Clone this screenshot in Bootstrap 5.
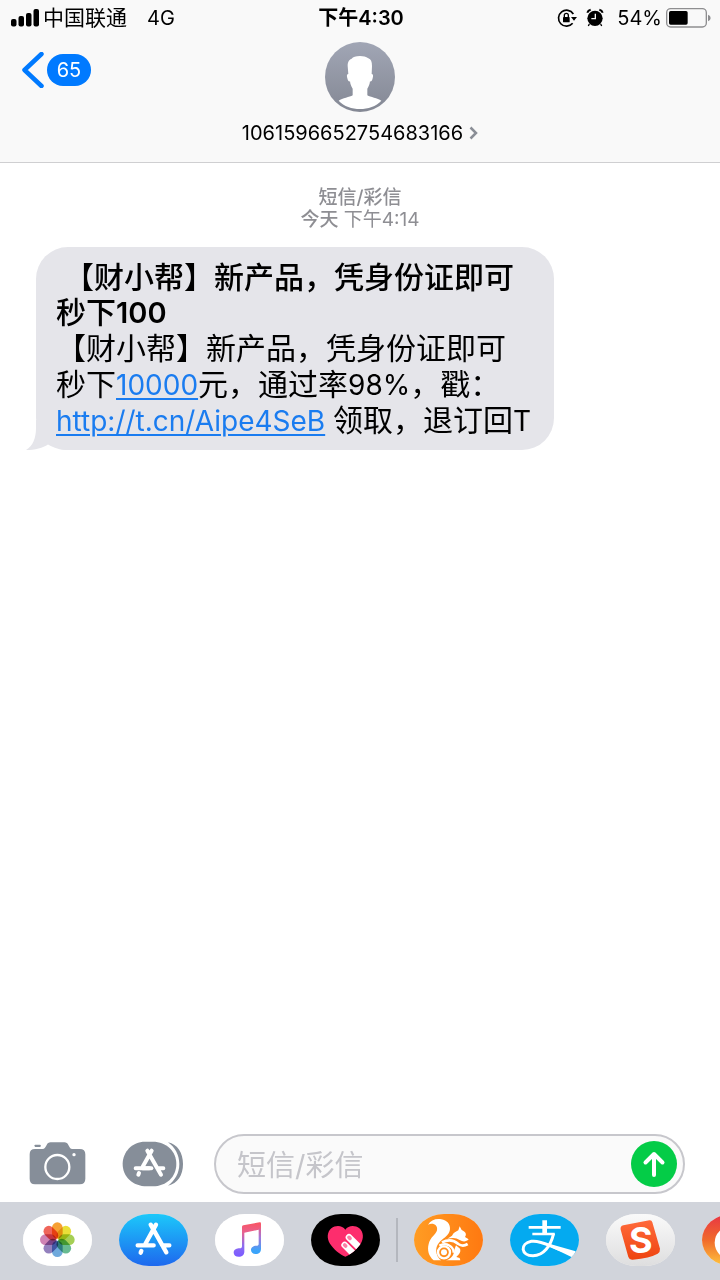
<!DOCTYPE html>
<html lang="zh-CN">
<head>
<meta charset="utf-8">
<meta name="viewport" content="width=device-width, initial-scale=1">
<title>短信/彩信</title>
<link href="https://cdn.jsdelivr.net/npm/bootstrap@5.3.0/dist/css/bootstrap.min.css" rel="stylesheet">
<style>
  body { font-family: Inter, "Noto Sans CJK SC", sans-serif; background: #fff; color: #000; }
  svg { display: block; flex-shrink: 0; }
  .top-area { background: #f9f9f9; border-bottom: 1px solid #cfcfd1; }
  .status-row { height: 36px; padding: 0 9px 0 11px; font-size: 20px; line-height: 36px; }
  .status-side { flex: 1 1 0; }
  .carrier { font-size: 21px; }
  .clock { font-size: 20px; font-weight: 600; }
  .nav-grid { display: grid; grid-template-columns: 1fr auto 1fr; padding: 6px 22px 0; height: 126px; }
  .back-btn { color: #007aff; gap: 3px; margin-top: 10px; height: 36px; }
  .unread { background: #007aff; color: #fff; border-radius: 16px; width: 44px; height: 32px; line-height: 32px; font-size: 20px; text-align: center; }
  .contact-name { font-size: 20px; line-height: 24px; gap: 6px; margin-top: 9px; color: #000; }
  .stamp { color: #8e8e93; font-size: 19px; line-height: 22px; padding-top: 24px; }
  .stamp b { font-weight: 500; }
  .bubble { background: #e5e5ea; border-radius: 32px; width: 72%; margin: 16px 0 0 36px; padding: 13px 14px 12px 20px; font-size: 30px; line-height: 36px; }
  .bubble p { position: relative; z-index: 1; }
  .bubble .title-line { font-weight: 500; line-height: 35px; }
  .bubble .lat { font-size: 28px; line-height: 28px; }
  .bubble .title-line .lat { font-weight: 600; font-size: 29px; }
  .bubble a { color: #1a7cf0; text-underline-offset: 3px; text-decoration-thickness: 2px; }
  .bubble-tail { position: absolute; left: -10px; bottom: 0; }
  .compose { padding: 0 35px 8px 29px; }
  .compose-field { border: 2px solid #c7c7cc; border-radius: 30px; background: #fafafa; height: 60px; padding: 0 6px 0 21px; margin-left: 30px; min-width: 0; }
  .compose-field input { font-size: 29px; line-height: 44px; width: 100%; min-width: 0; color: #000; }
  .compose-field input::placeholder { color: #c5c5ca; opacity: 1; }
  .gap-tools { margin-left: 36px; }
  .dock { background: #d1d4db; height: 78px; padding: 0 0 2px 23px; gap: 27px; overflow: hidden; }
  .dock button { border-radius: 30px / 26px; overflow: hidden; width: 69px; height: 52px; flex-shrink: 0; }
  .dock-rule { width: 2px; height: 44px; background: #b4b7be; margin: 0 -11px; flex-shrink: 0; }
  .petals rect { mix-blend-mode: multiply; }
</style>
</head>
<body class="d-flex flex-column min-vh-100">
<header class="top-area">
  <div class="status-row d-flex align-items-center">
    <div class="status-side d-flex align-items-center">
      <svg width="28" height="18" viewBox="0 0 56 36"><g fill="#000"><rect y="20" width="11" height="15" rx="4"/><rect x="15" y="14" width="11" height="21" rx="4"/><rect x="30" y="8" width="11" height="27" rx="4"/><rect x="45" width="11" height="35" rx="4"/></g></svg>
      <span class="carrier ms-1">中国联通</span>
      <span class="ms-3 ps-1">4G</span>
    </div>
    <div class="clock">下午4:30</div>
    <div class="status-side d-flex align-items-center justify-content-end">
      <svg width="20" height="20" viewBox="0 0 60 60"><path d="M49 18A24 24 0 1 0 47 46" fill="none" stroke="#000" stroke-width="5"/><path d="M42 27h18l-9 11z"/><rect x="18" y="27" width="20" height="16" rx="2"/><path d="M22 28v-6a6 6 0 0 1 12 0v6" fill="none" stroke="#000" stroke-width="4"/></svg>
      <svg class="mx-2" width="20" height="20" viewBox="0 0 60 60"><circle cx="30" cy="31" r="23"/><path d="M7 14Q9 7 17 5M43 5q8 2 10 9" fill="none" stroke="#000" stroke-width="6"/><path d="M13 48l-3 6M47 48l3 6" fill="none" stroke="#000" stroke-width="4"/><path d="M31 17v15H19" fill="none" stroke="#f9f9f9" stroke-width="4"/></svg>
      <span class="ms-1">54%</span>
      <svg class="ms-1" width="45" height="20" viewBox="0 0 135 60"><rect x="2" y="2" width="119" height="55" rx="12" fill="none" stroke="#8e8e90" stroke-width="4"/><rect x="9" y="9" width="56" height="41" rx="5"/><path d="M126 20q8 3 8 10t-8 10z" fill="#8e8e90"/></svg>
    </div>
  </div>
  <div class="nav-grid">
    <div>
      <button type="button" class="back-btn border-0 bg-transparent p-0 d-flex align-items-center" aria-label="返回">
        <svg width="22" height="36" viewBox="0 0 44 72"><path d="M39 4 5 36l34 32" fill="none" stroke="#007aff" stroke-width="9" stroke-linecap="round" stroke-linejoin="round"/></svg>
        <span class="unread">65</span>
      </button>
    </div>
    <button type="button" class="border-0 bg-transparent p-0 d-flex flex-column align-items-center">
      <svg width="70" height="70" viewBox="0 0 210 210">
        <defs><linearGradient id="av" x2="0" y2="1"><stop stop-color="#a1a6b5"/><stop offset="1" stop-color="#848894"/></linearGradient></defs>
        <circle cx="105" cy="105" r="105" fill="url(#av)"/>
        <path d="M105 42C92 42 84 45 80 50 70 54 68 62 68 72L70 96C65 95 65 102 67 109 69 117 72 120 75 118 76 127 79 134 83 140V160C74 166 52 168 41 176 57 193 81 201 105 201S153 193 169 176C158 168 136 166 127 160V140C131 134 134 127 135 118 138 120 141 117 143 109 145 102 145 95 140 96L141 72C141 59 138 52 130 49 123 44 115 42 105 42Z" fill="#fff"/>
      </svg>
      <span class="contact-name d-flex align-items-center">1061596652754683166
        <svg width="9" height="14" viewBox="0 0 18 28"><path d="M3 3 14 14 3 25" fill="none" stroke="#8a8e96" stroke-width="5"/></svg>
      </span>
    </button>
    <div></div>
  </div>
</header>

<main class="flex-grow-1">
  <div class="stamp text-center"><b>短信/彩信</b><br><b>今天</b> 下午4:14</div>
  <div class="bubble position-relative">
    <p class="title-line mb-0">&nbsp;【财小帮】新产品，凭身份证即可<br>秒下<span class="lat">100</span></p>
    <p class="mb-0">【财小帮】新产品，凭身份证即可<br>秒下<a class="lat" href="#">10000</a>元，通过率<span class="lat">98%</span>，戳：<br><a class="lat" href="#">http://t.cn/Aipe4SeB</a><span class="lat"> </span>领取，退订回<span class="lat">T</span></p>
    <svg class="bubble-tail" width="45" height="30" viewBox="0 0 45 30"><path d="M10 0V8C10 18 7 26 0 30 9 30 17 28 22 24.500 28 28 34 30 42 30V0Z" fill="#e5e5ea"/></svg>
  </div>
</main>

<footer>
  <form class="compose d-flex align-items-center" onsubmit="return false">
    <button type="button" class="border-0 bg-transparent p-0" aria-label="相机">
      <svg width="57" height="44" viewBox="0 0 171 132"><g fill="#868e99"><rect x="17" y="8" width="18" height="7" rx="2"/><path d="M18 21H40C48 21 49 16 53 9 55 4 59 1 65 1H106C112 1 116 4 118 9 122 16 123 21 130 21H152Q169 21 169 37V110Q169 127 152 127H18Q2 127 2 110V37Q2 21 18 21Z"/></g><circle cx="85" cy="75" r="36" fill="none" stroke="#fff" stroke-width="7"/><circle cx="135" cy="38" r="5" fill="#fff"/></svg>
    </button>
    <button type="button" class="gap-tools border-0 bg-transparent p-0" aria-label="应用">
      <svg width="62" height="46" viewBox="0 0 186 138"><path d="M138 4C167 10 183 36 183 69S167 128 138 134C158 119 172 97 172 69S158 18 138 4Z" fill="#868e99"/><path d="M69 2H92C134 2 163 31 163 69S134 136 92 136H75C31 136 2 106 2 69S31 2 69 2Z" fill="#868e99"/><g fill="none" stroke="#fff" stroke-width="12" stroke-linecap="round"><path d="M76 29 117 101M89 29 62 77M41 82H82M106 82H124M51 96 49 101"/><path d="M62 82H88"/></g></svg>
    </button>
    <div class="compose-field flex-grow-1 d-flex align-items-center">
      <input type="text" class="flex-grow-1 border-0 bg-transparent p-0 pt-1" placeholder="短信/彩信" aria-label="短信/彩信">
      <button type="submit" class="border-0 bg-transparent p-0" aria-label="发送">
        <svg width="46" height="46" viewBox="0 0 92 92"><circle cx="46" cy="46" r="46" fill="#04cc47"/><path d="M46 68V26M29 43 46 26l17 17" fill="none" stroke="#fff" stroke-width="8" stroke-linecap="round" stroke-linejoin="round"/></svg>
      </button>
    </div>
  </form>
  <nav class="dock d-flex align-items-center" aria-label="应用栏">
    <button type="button" class="border-0 p-0" aria-label="照片">
      <svg width="69" height="52" viewBox="0 0 207 156"><rect width="207" height="156" fill="#fff"/>
        <g class="petals" transform="translate(103 77)"><rect x="-16" y="-52" width="32" height="49" rx="16" fill="#f6a033"/><rect x="-16" y="-52" width="32" height="49" rx="16" fill="#e9df38" transform="rotate(45)"/><rect x="-16" y="-52" width="32" height="49" rx="16" fill="#a5cf55" transform="rotate(90)"/><rect x="-16" y="-52" width="32" height="49" rx="16" fill="#67ba91" transform="rotate(135)"/><rect x="-16" y="-52" width="32" height="49" rx="16" fill="#6fa9dc" transform="rotate(180)"/><rect x="-16" y="-52" width="32" height="49" rx="16" fill="#9380bd" transform="rotate(225)"/><rect x="-16" y="-52" width="32" height="49" rx="16" fill="#cf83b4" transform="rotate(270)"/><rect x="-16" y="-52" width="32" height="49" rx="16" fill="#ef655a" transform="rotate(315)"/></g></svg>
    </button>
    <button type="button" class="border-0 p-0" aria-label="App Store">
      <svg width="69" height="52" viewBox="0 0 207 156"><defs><linearGradient id="as" x2="0" y2="1"><stop stop-color="#1cc8fa"/><stop offset="1" stop-color="#1e68ee"/></linearGradient></defs><rect width="207" height="156" fill="url(#as)"/><g fill="none" stroke="#fff" stroke-width="13" stroke-linecap="round"><path d="M95 32 142 115M111 32 79 90M56 94H104M130 94H151M67 111 65 116"/></g></svg>
    </button>
    <button type="button" class="border-0 p-0" aria-label="音乐">
      <svg width="69" height="52" viewBox="0 0 207 156"><defs><linearGradient id="mu" gradientUnits="userSpaceOnUse" x1="105" y1="25" x2="105" y2="125"><stop stop-color="#fa5562"/><stop offset=".3" stop-color="#e8618f"/><stop offset=".7" stop-color="#8c6cf0"/><stop offset="1" stop-color="#7c5cff"/></linearGradient><linearGradient id="mv" gradientUnits="userSpaceOnUse" x1="0" y1="30" x2="0" y2="110"><stop stop-color="#f6586e"/><stop offset=".5" stop-color="#a576d8"/><stop offset="1" stop-color="#3ba4fa"/></linearGradient></defs><rect width="207" height="156" fill="#fff"/><path d="M81 39Q81 35 85 34L134 25Q138 24 138 29V46L88 56V113C88 122 81 128 71 128 62 128 56 123 56 116 56 106 66 103 74 103 79 103 81 101 81 96Z" fill="url(#mu)"/><path d="M131 44 138 42V104C138 114 132 120 122 120 113 120 108 115 108 108 108 99 116 95 124 95 129 95 131 93 131 89Z" fill="url(#mv)"/></svg>
    </button>
    <button type="button" class="border-0 p-0" aria-label="Digital Touch">
      <svg width="69" height="52" viewBox="0 0 207 156"><defs><clipPath id="ht"><path d="M103 47C112 34 132 33 145 43 158 54 159 74 149 89 138 106 120 121 103 128 86 121 68 106 57 89 47 74 48 54 61 43 74 33 94 34 103 47Z"/></clipPath></defs><rect width="207" height="156"/><path d="M103 47C112 34 132 33 145 43 158 54 159 74 149 89 138 106 120 121 103 128 86 121 68 106 57 89 47 74 48 54 61 43 74 33 94 34 103 47Z" fill="#fd2d6d"/><g clip-path="url(#ht)"><path d="M101 93 139 131M114 70 160 116" stroke="#fff" stroke-width="20" stroke-linecap="round"/><path d="M101 93l3 3M114 70l3 3" stroke="#fb7fa6" stroke-width="11" stroke-linecap="round"/></g></svg>
    </button>
    <div class="dock-rule"></div>
    <button type="button" class="border-0 p-0" aria-label="UC浏览器">
      <svg width="69" height="52" viewBox="0 0 207 156"><defs><linearGradient id="uc"><stop stop-color="#ff9c23"/><stop offset="1" stop-color="#ff7911"/></linearGradient></defs><rect width="207" height="156" fill="url(#uc)"/><path d="M42 32C50 18 66 13 82 16 99 19 109 30 108 45 107 59 96 68 84 77 69 89 64 103 68 119 71 130 77 136 82 139H59C44 126 39 109 44 90 48 71 66 61 69 49 72 34 58 25 42 32Z" fill="#fff"/><path d="M114 65C119 55 126 53 133 49L137 37 143 48C155 53 159 61 153 69L164 76C157 84 146 84 137 78 127 71 117 70 100 74Z" fill="#fff"/><g fill="none" stroke="#fff"><path d="M84 85C105 74 123 81 133 90 143 97 153 95 161 90" stroke-width="8"/><circle cx="90" cy="115" r="18" stroke-width="7"/><path d="M76 95C98 84 119 97 119 116" stroke-width="7"/></g><circle cx="90" cy="115" r="9" fill="#fff"/><path d="M126 94 138 104C142 115 134 121 127 129L137 132 139 139H96C112 134 120 124 121 107Z" fill="#fff"/></svg>
    </button>
    <button type="button" class="border-0 p-0" aria-label="支付宝">
      <svg width="69" height="52" viewBox="0 0 207 156"><rect width="207" height="156" fill="#04aaf0"/><path d="M56 40H152M67 60H134" stroke="#fff" stroke-width="8"/><path d="M104 19V60" stroke="#fff" stroke-width="14"/><path d="M131 58C122 96 101 125 69 125 32 125 29 89 64 82 91 77 122 98 158 109" fill="none" stroke="#fff" stroke-width="9"/><path d="M120 90 197 112 189 131 116 96Z" fill="#fff"/></svg>
    </button>
    <button type="button" class="border-0 p-0" aria-label="搜狗输入法">
      <svg width="69" height="52" viewBox="0 0 207 156"><defs><linearGradient id="sg" x2="0" y2="1"><stop stop-color="#fafafa"/><stop offset="1" stop-color="#dededf"/></linearGradient><linearGradient id="sr" x2="0" y2="1"><stop stop-color="#ff6a3a"/><stop offset="1" stop-color="#ee4410"/></linearGradient></defs><rect width="207" height="156" fill="url(#sg)"/><path d="M52 34 130 19Q137 18 139 25L162 104Q163 113 155 119 132 132 80 137 70 138 67 129L44 47Q42 36 52 34Z" fill="url(#sr)"/><text x="104" y="117" text-anchor="middle" font-family="Inter, sans-serif" font-weight="700" font-size="108" fill="#fff">S</text></svg>
    </button>
    <button type="button" class="border-0 p-0" aria-label="更多">
      <svg width="69" height="52" viewBox="0 0 207 156"><defs><linearGradient id="mo" x2="0" y2="1"><stop stop-color="#e83445"/><stop offset=".5" stop-color="#f06a2b"/><stop offset="1" stop-color="#ffc53d"/></linearGradient></defs><rect width="207" height="156" fill="url(#mo)"/><circle cx="88" cy="86" r="50" fill="#fff"/></svg>
    </button>
  </nav>
</footer>
<script src="https://cdn.jsdelivr.net/npm/bootstrap@5.3.0/dist/js/bootstrap.bundle.min.js"></script>
</body>
</html>
